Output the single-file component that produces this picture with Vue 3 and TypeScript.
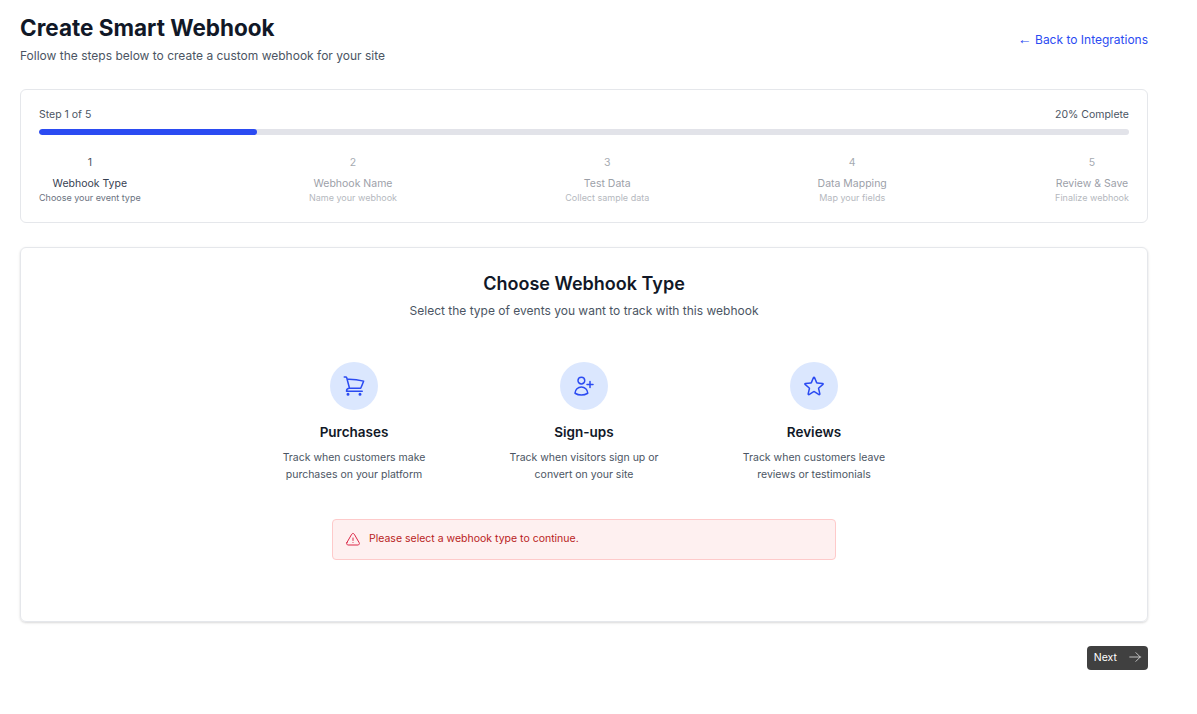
<template>
  <div class="page">
    <header class="head">
      <div>
        <h1>Create Smart Webhook</h1>
        <p class="lead">Follow the steps below to create a custom webhook for your site</p>
      </div>
      <a class="back" href="#"><span class="arrow">←</span> Back to Integrations</a>
    </header>

    <section class="progress-card">
      <div class="progress-top">
        <span>Step {{ current }} of {{ steps.length }}</span>
        <span>{{ percent }}% Complete</span>
      </div>
      <div class="track">
        <div class="fill" :style="{ width: percent + '%' }"></div>
      </div>
      <ol class="steps">
        <li v-for="(s, i) in steps" :key="s.title" class="step" :class="{ active: i + 1 === current }">
          <span class="num">{{ i + 1 }}</span>
          <span class="step-title">{{ s.title }}</span>
          <span class="step-sub">{{ s.sub }}</span>
        </li>
      </ol>
    </section>

    <section class="main-card">
      <h2>Choose Webhook Type</h2>
      <p class="main-sub">Select the type of events you want to track with this webhook</p>

      <div class="options">
        <div class="option">
          <div class="icon-wrap">
            <svg viewBox="0 0 24 24" width="24" height="24" fill="none" stroke="currentColor" stroke-width="1.5" stroke-linecap="round" stroke-linejoin="round">
              <path d="M2.25 3h1.39c.51 0 .95.34 1.09.83l.38 1.44M7.5 14.25a3 3 0 0 0-3 3h15.75M7.5 14.25h11.22c1.12-2.3 2.1-4.68 2.92-7.14A60 60 0 0 0 5.11 5.27M7.5 14.25 5.11 5.27" />
              <circle cx="6" cy="20.25" r=".75" />
              <circle cx="18" cy="20.25" r=".75" />
            </svg>
          </div>
          <h3>Purchases</h3>
          <p>Track when customers make<br />purchases on your platform</p>
        </div>
        <div class="option">
          <div class="icon-wrap">
            <svg viewBox="0 0 24 24" width="24" height="24" fill="none" stroke="currentColor" stroke-width="1.5" stroke-linecap="round" stroke-linejoin="round">
              <path d="M18 7.5v3m0 0v3m0-3h3m-3 0h-3M12.75 6.38a3.38 3.38 0 1 1-6.75 0 3.38 3.38 0 0 1 6.75 0ZM3 19.24v-.12a6.38 6.38 0 0 1 12.75 0v.12A12.3 12.3 0 0 1 9.37 21 12.3 12.3 0 0 1 3 19.24Z" />
            </svg>
          </div>
          <h3>Sign-ups</h3>
          <p>Track when visitors sign up or<br />convert on your site</p>
        </div>
        <div class="option">
          <div class="icon-wrap">
            <svg viewBox="0 0 24 24" width="24" height="24" fill="none" stroke="currentColor" stroke-width="1.5" stroke-linecap="round" stroke-linejoin="round">
              <path d="M11.48 3.5a.56.56 0 0 1 1.04 0l2.12 5.11c.08.2.27.34.48.35l5.52.44c.5.04.7.66.32.99l-4.2 3.6a.56.56 0 0 0-.18.55l1.28 5.38a.56.56 0 0 1-.84.61l-4.72-2.88a.56.56 0 0 0-.59 0l-4.72 2.88a.56.56 0 0 1-.84-.61l1.28-5.38a.56.56 0 0 0-.18-.55l-4.2-3.6a.56.56 0 0 1 .32-.99l5.52-.44c.21-.01.4-.15.48-.35L11.48 3.5Z" />
            </svg>
          </div>
          <h3>Reviews</h3>
          <p>Track when customers leave<br />reviews or testimonials</p>
        </div>
      </div>

      <div class="alert">
        <svg viewBox="0 0 24 24" width="16" height="16" fill="none" stroke="currentColor" stroke-width="1.5" stroke-linecap="round" stroke-linejoin="round">
          <path d="M12 9v3.75m-9.3 3.38c-.87 1.5.22 3.37 1.95 3.37h14.7c1.73 0 2.81-1.87 1.95-3.37L13.95 3.38c-.87-1.5-3.03-1.5-3.9 0L2.7 16.13ZM12 15.75h.01" />
        </svg>
        <span class="alert-text">Please select a webhook type to continue.</span>
      </div>
    </section>

    <div class="foot">
      <button class="next" type="button">
        Next
        <svg viewBox="0 0 24 24" width="14" height="14" fill="none" stroke="currentColor" stroke-width="1.5" stroke-linecap="round" stroke-linejoin="round">
          <path d="M13.5 4.5 21 12m0 0-7.5 7.5M21 12H3" />
        </svg>
      </button>
    </div>
  </div>
</template>

<script setup lang="ts">
const current = 1;
const percent = 20;

const steps = [
  { title: 'Webhook Type', sub: 'Choose your event type' },
  { title: 'Webhook Name', sub: 'Name your webhook' },
  { title: 'Test Data', sub: 'Collect sample data' },
  { title: 'Data Mapping', sub: 'Map your fields' },
  { title: 'Review & Save', sub: 'Finalize webhook' }
];
</script>

<style>
html,
body {
  background: #fff;
}
</style>

<style scoped>
.page {
  width: 1128px;
  padding: 15px 0 0 20px;
  font-family: Inter, "Liberation Sans", sans-serif;
  color: #111827;
}

.head {
  display: flex;
  justify-content: space-between;
  align-items: center;
  margin-bottom: 25px;
}

h1 {
  margin: 0;
  font-size: 22.5px;
  line-height: 26px;
  font-weight: 700;
  color: #111827;
}

.lead {
  margin: 7px 0 0;
  font-size: 12px;
  line-height: 16px;
  color: #4b5563;
}

.back {
  font-size: 12px;
  line-height: 16px;
  color: #2b4bf2;
  text-decoration: none;
}

.arrow {
  font-family: "Liberation Sans", sans-serif;
  font-size: 14px;
  line-height: 1;
}

.progress-card {
  box-sizing: border-box;
  height: 134px;
  padding: 17px 18px 0;
  border: 1px solid #e5e7eb;
  border-radius: 6px;
  margin-bottom: 24px;
}

.progress-top {
  display: flex;
  justify-content: space-between;
  font-size: 10.5px;
  line-height: 16px;
  color: #4b5563;
}

.track {
  height: 6px;
  margin-top: 6px;
  border-radius: 3px;
  background: #e2e3e9;
  overflow: hidden;
}

.fill {
  height: 100%;
  border-radius: 3px;
  background: #2b4bf2;
}

.steps {
  display: flex;
  justify-content: space-between;
  list-style: none;
  margin: 20px 0 0;
  padding: 0;
}

.step {
  display: flex;
  flex-direction: column;
  align-items: center;
  opacity: 0.5;
}

.step.active {
  opacity: 1;
}

.num {
  font-size: 10.5px;
  line-height: 16px;
  color: #4b5563;
}

.step-title {
  margin-top: 5px;
  font-size: 10.5px;
  line-height: 16px;
  color: #374151;
}

.step-sub {
  font-size: 9px;
  line-height: 12px;
  color: #6b7280;
}

.main-card {
  box-sizing: border-box;
  height: 375px;
  padding: 25px 0 0;
  border: 1px solid #e5e7eb;
  border-radius: 6px;
  box-shadow: 0 1px 3px rgba(0, 0, 0, 0.1), 0 1px 2px rgba(0, 0, 0, 0.06);
  text-align: center;
}

h2 {
  margin: 0;
  font-size: 18px;
  line-height: 22px;
  font-weight: 600;
  color: #111827;
}

.main-sub {
  margin: 8px 0 0;
  font-size: 12px;
  line-height: 16px;
  color: #4b5563;
}

.options {
  display: grid;
  grid-template-columns: repeat(3, 206px);
  justify-content: center;
  gap: 24px;
  margin-top: 43px;
}

.option {
  display: flex;
  flex-direction: column;
  align-items: center;
}

.icon-wrap {
  display: flex;
  align-items: center;
  justify-content: center;
  width: 48px;
  height: 48px;
  border-radius: 50%;
  background: #dbe7fe;
  color: #2b4bf2;
}

h3 {
  margin: 13px 0 0;
  font-size: 13.5px;
  line-height: 18px;
  font-weight: 600;
  color: #111827;
}

.option p {
  margin: 8px 0 0;
  font-size: 10.5px;
  line-height: 17px;
  color: #4b5563;
}

.alert {
  box-sizing: border-box;
  display: flex;
  align-items: center;
  gap: 8px;
  width: 504px;
  height: 41px;
  margin: 36px auto 0;
  padding: 0 12px;
  border: 1px solid #fecaca;
  border-radius: 4px;
  background: #fef0f0;
  color: #b91c1c;
  font-size: 10.5px;
  text-align: left;
}

.alert svg {
  color: #dc2647;
}

.alert-text {
  margin-bottom: 2px;
}

.foot {
  display: flex;
  justify-content: flex-end;
  margin-top: 24px;
}

.next {
  display: flex;
  align-items: center;
  gap: 11px;
  height: 24px;
  padding: 0 6px 2px 7px;
  border: 0;
  border-radius: 4px;
  background: #404040;
  color: #fff;
  font-family: inherit;
  font-size: 10.5px;
  font-weight: 400;
}

.next svg {
  color: #d4d4d4;
}
</style>
